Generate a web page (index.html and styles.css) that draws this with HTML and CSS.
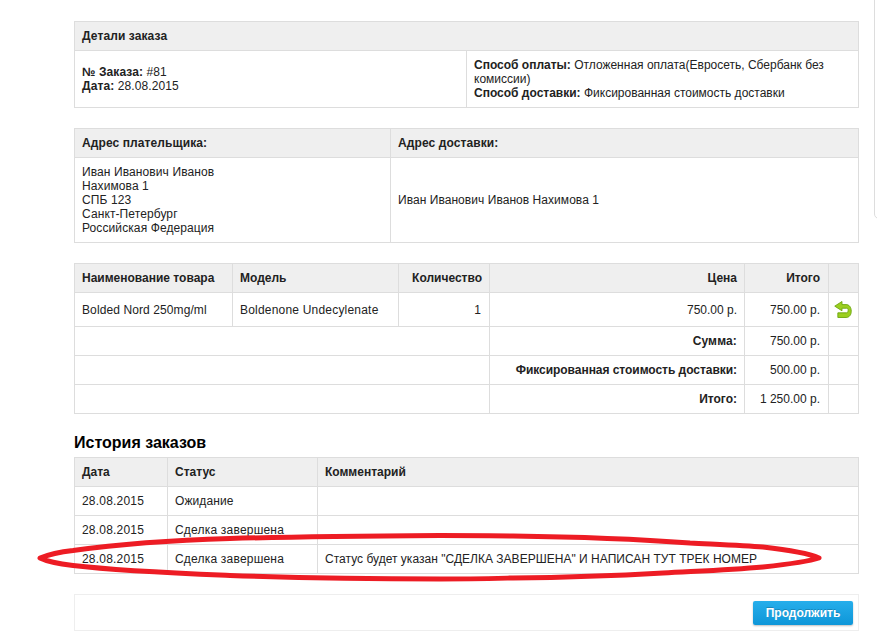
FILE: index.html
```html
<!DOCTYPE html>
<html lang="ru">
<head>
<meta charset="utf-8">
<title>Детали заказа</title>
<link rel="stylesheet" href="styles.css">
</head>
<body>
<div class="page">
  <div class="edge"></div>
  <table class="list t-order">
    <colgroup><col class="c392"><col></colgroup>
    <thead><tr><td colspan="2" class="sp1">Детали заказа</td></tr></thead>
    <tbody><tr>
      <td class="sp1"><b>№ Заказа:</b> #81<br><b>Дата:</b> 28.08.2015</td>
      <td><b>Способ оплаты:</b> Отложенная оплата(Евросеть, Сбербанк без комиссии)<br><b>Способ доставки:</b> Фиксированная стоимость доставки</td>
    </tr></tbody>
  </table>
  <table class="list t-addr">
    <colgroup><col class="c316"><col></colgroup>
    <thead><tr><td class="sp1">Адрес плательщика:</td><td class="sp1">Адрес доставки:</td></tr></thead>
    <tbody><tr>
      <td class="sp1">Иван Иванович Иванов<br>Нахимова 1<br>СПБ 123<br>Санкт-Петербург<br>Российская Федерация</td>
      <td class="sp3">Иван Иванович Иванов Нахимова 1</td>
    </tr></tbody>
  </table>
  <table class="list t-prod">
    <colgroup><col class="p1"><col class="p2"><col class="p3"><col class="p4"><col class="p5"><col class="p6"></colgroup>
    <thead><tr><td>Наименование товара</td><td>Модель</td><td class="r">Количество</td><td class="r">Цена</td><td class="r r8">Итого</td><td></td></tr></thead>
    <tbody>
      <tr class="tall"><td class="sp1">Bolded Nord 250mg/ml</td><td class="sp2">Boldenone Undecylenate</td><td class="r r8">1</td><td class="r">750.00 р.</td><td class="r r8">750.00 р.</td>
        <td class="ic"><svg class="ret" width="18" height="17" viewBox="-.5 -.5 17 16.500"><path d="M7 0 0 4.500 7 9V6.500h4.500C12.800 6.500 13 7.500 13 8.500c0 1.200-.5 2.500-1.500 2.500H3v4.500h8c3 0 5-2.500 5-6C16 5.500 14 3 11 3H7z" fill="#9ccf1f" stroke="#6ea811" stroke-width=".9" stroke-linejoin="round"/></svg></td></tr>
      <tr><td colspan="3"></td><td class="r"><b class="r1">Сумма:</b></td><td class="r r8">750.00 р.</td><td></td></tr>
      <tr><td colspan="3"></td><td class="r"><b class="tight">Фиксированная стоимость доставки:</b></td><td class="r r8">500.00 р.</td><td></td></tr>
      <tr><td colspan="3"></td><td class="r"><b>Итого:</b></td><td class="r r8">1 250.00 р.</td><td></td></tr>
    </tbody>
  </table>
  <h2 class="hist">История заказов</h2>
  <table class="list t-hist">
    <colgroup><col class="h1"><col class="h2c"><col></colgroup>
    <thead><tr><td>Дата</td><td>Статус</td><td>Комментарий</td></tr></thead>
    <tbody>
      <tr><td class="sp2">28.08.2015</td><td class="sp1">Ожидание</td><td></td></tr>
      <tr><td class="sp2">28.08.2015</td><td class="sp2">Сделка завершена</td><td></td></tr>
      <tr><td class="sp2">28.08.2015</td><td class="sp2">Сделка завершена</td><td class="sp4">Статус будет указан "СДЕЛКА ЗАВЕРШЕНА" И НАПИСАН ТУТ ТРЕК НОМЕР</td></tr>
    </tbody>
  </table>
  <div class="buttons"><a class="button" href="#">Продолжить</a></div>
  <svg class="scribble" width="877" height="70" viewBox="0 0 877 70"><path d="M40 28C50 24 60 22 73 20.500 120 14 180 10 230 8.500 300 6.500 370 6 440 5.500 465 5.500 490 5.500 513 6 590 7 663 11 690 13 720 14.500 745 15.500 763 17 790 20 810 24 819 28 810 31 790 34 763 37 730 40 700 41 663 43 610 46 560 47.500 513 48 490 48.500 470 49 440 49 370 49 300 48 230 45.500 170 43 120 41 73 35.500 60 34 48 32 40 28Z" fill="none" stroke="#ed1c24" stroke-width="5" stroke-linejoin="round"/></svg>
</div>
</body>
</html>
```
FILE: styles.css
```css
html, body { margin: 0; padding: 0; background: #fff; }
body { font: 12px/14px "Liberation Sans", Arial, sans-serif; color: #222; }
.page { position: relative; width: 785px; height: 639px; padding: 21px 18px 0 74px; overflow: hidden; }
.edge { position: absolute; left: 874px; top: -10px; width: 20px; height: 229px; border: 1px solid #ddd; border-radius: 0 0 0 5px; box-sizing: border-box; }
.list { width: 785px; table-layout: fixed; border-collapse: collapse; margin: 0 0 20px; }
.list td { border: 1px solid #ddd; padding: 7px; vertical-align: middle; }
.list thead td { background: #efefef; font-weight: bold; }
.list b { font-weight: bold; }
.r { text-align: right; }
.list td.r8 { padding-right: 8px; }
.r1 { letter-spacing: .15px; }
.tight { letter-spacing: -.04px; }
.sp1 { letter-spacing: .1px; }
.sp2 { letter-spacing: .2px; }
.sp3 { letter-spacing: .05px; }
.sp4 { letter-spacing: .02px; }
.tall td { padding-top: 10px; padding-bottom: 9px; }
.c392 { width: 392px; }
.c316 { width: 316px; }
.p1 { width: 158px; } .p2 { width: 166px; } .p3 { width: 91px; } .p4 { width: 255px; } .p5 { width: 84px; } .p6 { width: 30px; }
.h1 { width: 93px; } .h2c { width: 150px; }
.list td.ic { padding: 0 2px 0 0; text-align: center; }
.ret { display: block; margin: -1px auto 0; }
.hist { font-size: 16px; line-height: 20px; font-weight: bold; color: #000; margin: 0 0 4px; }
.t-prod { margin-bottom: 19px; }
.t-hist { margin-bottom: 20px; }
.buttons { border: 1px solid #eee; height: 35px; width: 783px; display: flex; align-items: center; justify-content: flex-end; }
.button { display: block; width: 100px; height: 24px; margin-right: 5px; line-height: 24px; text-align: center; border-radius: 2px; background: linear-gradient(#26aeeb, #0e96d8); color: #fff; font-weight: bold; text-decoration: none; box-shadow: 0 1px 2px rgba(0,0,0,.25); text-shadow: 0 -1px 0 rgba(0,0,0,.2); }
.scribble { position: absolute; left: 0; top: 530px; }
```
